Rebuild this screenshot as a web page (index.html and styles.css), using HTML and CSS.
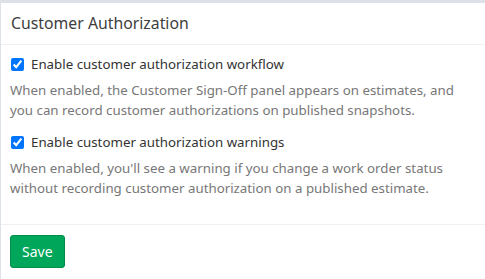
FILE: index.html
```html
<!DOCTYPE html>
<html lang="en">
<head>
    <meta charset="UTF-8">
    <meta name="viewport" content="width=device-width, initial-scale=1.0">
    <title>Customer Authorization</title>
    <link rel="stylesheet" href="styles.css">
</head>
<body>
    <div class="card">
        <div class="card-header">
            <h3>Customer Authorization</h3>
        </div>
        <div class="card-body">
            <div class="form-check">
                <label class="check-label">
                    <input type="checkbox" checked>
                    <span>Enable customer authorization workflow</span>
                </label>
                <p class="help">When enabled, the Customer Sign-Off panel appears on estimates, and you can record customer authorizations on published snapshots.</p>
            </div>
            <div class="form-check">
                <label class="check-label">
                    <input type="checkbox" checked>
                    <span>Enable customer authorization warnings</span>
                </label>
                <p class="help">When enabled, you'll see a warning if you change a work order status without recording customer authorization on a published estimate.</p>
            </div>
        </div>
        <div class="card-footer">
            <button class="btn-save">Save</button>
        </div>
    </div>
</body>
</html>
```

FILE: styles.css
```css
body {
    margin: 0;
    padding-top: 3px;
    background-color: #dde1e8;
    font-family: "Noto Sans", "Open Sans", sans-serif;
    font-size: 13.3px;
    color: #333;
}
.card {
    background-color: white;
    border-left: 1px solid #dde1e8;
    min-height: 276px;
}
.card-header {
    padding: 10px 10px 10px 10px;
    border-bottom: 1px solid #f0f0f0;
}
.card-header h3 {
    margin: 0;
    font-size: 15.8px;
    font-weight: normal;
    line-height: 21px;
    color: #3d3d3d;
}
.card-body {
    padding: 9px 10px 26px 9px;
    border-bottom: 1px solid #f0f0f0;
}
.form-check {
    margin-bottom: 12px;
}
.form-check:last-child {
    margin-bottom: 0;
}
.check-label {
    display: flex;
    align-items: center;
    line-height: 20px;
    color: #333;
}
.check-label input {
    width: 13px;
    height: 13px;
    margin: 0 7px 0 1px;
}
.help {
    margin: 7px 0 0 0;
    line-height: 19.5px;
    color: #777;
}
.card-footer {
    padding: 10px 10px 10px 9px;
}
.btn-save {
    font-family: inherit;
    font-size: 14px;
    background-color: #00a65a;
    border: 1px solid #008d4c;
    border-radius: 3px;
    color: white;
    padding: 6px 11px;
    line-height: 19px;
    cursor: pointer;
}
```
